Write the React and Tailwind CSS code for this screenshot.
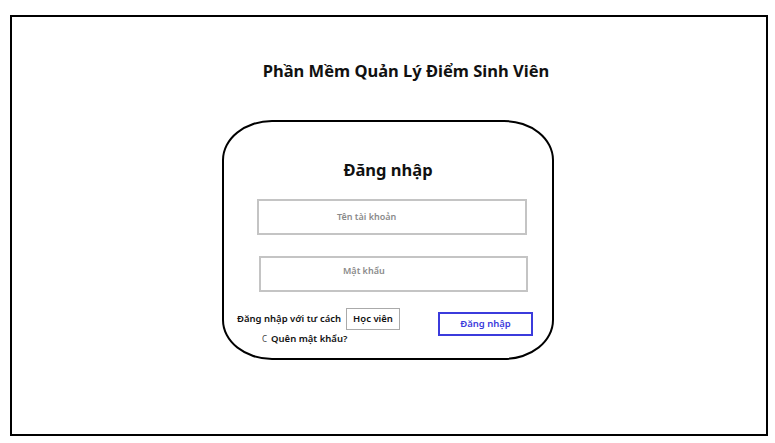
import React from "react";

const App = () => {
  return (
    <div className="w-[775px] h-[443px] bg-white pt-[15px] pl-[10px] font-['Noto_Sans',sans-serif]">
      <div className="w-[758px] h-[421px] border-2 border-black flex flex-col">
        <h1 className="pt-[42px] pl-[34px] text-center text-[16.5px] leading-[24px] font-bold text-[#111]">
          Phần Mềm Quản Lý Điểm Sinh Viên
        </h1>

        <div className="mt-[37px] ml-[210px] w-[332px] h-[240px] border-2 border-black rounded-[50px_/_40px] flex flex-col">
          <h2 className="mt-[36px] text-center text-[16.5px] leading-[24px] font-bold text-[#111]">
            Đăng nhập
          </h2>

          <div className="mt-[17px] ml-[33px] w-[270px] h-[36px] border-2 border-[#c4c4c4] flex items-center pl-[78px]">
            <span className="text-[9px] font-semibold text-[#8a8a8a]">Tên tài khoản</span>
          </div>

          <div className="mt-[21px] ml-[35px] w-[269px] h-[36px] border-2 border-[#c4c4c4] pl-[82px] pt-[7px] text-[9px] leading-[12px] font-semibold text-[#8a8a8a]">
            Mật khẩu
          </div>

          <div className="mt-[16px] flex">
            <div className="ml-[13px] flex flex-col">
              <div className="flex items-center">
                <span className="text-[9.5px] font-semibold text-[#111] w-[102px] whitespace-nowrap">
                  Đăng nhập với tư cách
                </span>
                <div className="ml-[7px] w-[54px] h-[22px] border border-[#aaa] flex items-center justify-center text-[9.5px] font-semibold text-[#111]">
                  Học viên
                </div>
              </div>
              <div className="mt-[2px] ml-[25px] flex items-center gap-[4px] text-[9.5px] font-semibold text-[#111]">
                <span className="text-[8px] font-normal text-[#444]">C</span>
                <span>Quên mật khẩu?</span>
              </div>
            </div>
            <button className="ml-[38px] mt-[4px] w-[95px] h-[24px] border-2 border-[#3b3bdc] flex items-center justify-center text-[9.5px] font-semibold text-[#3b3bdc]">
              Đăng nhập
            </button>
          </div>
        </div>
      </div>
    </div>
  );
};

export default App;
